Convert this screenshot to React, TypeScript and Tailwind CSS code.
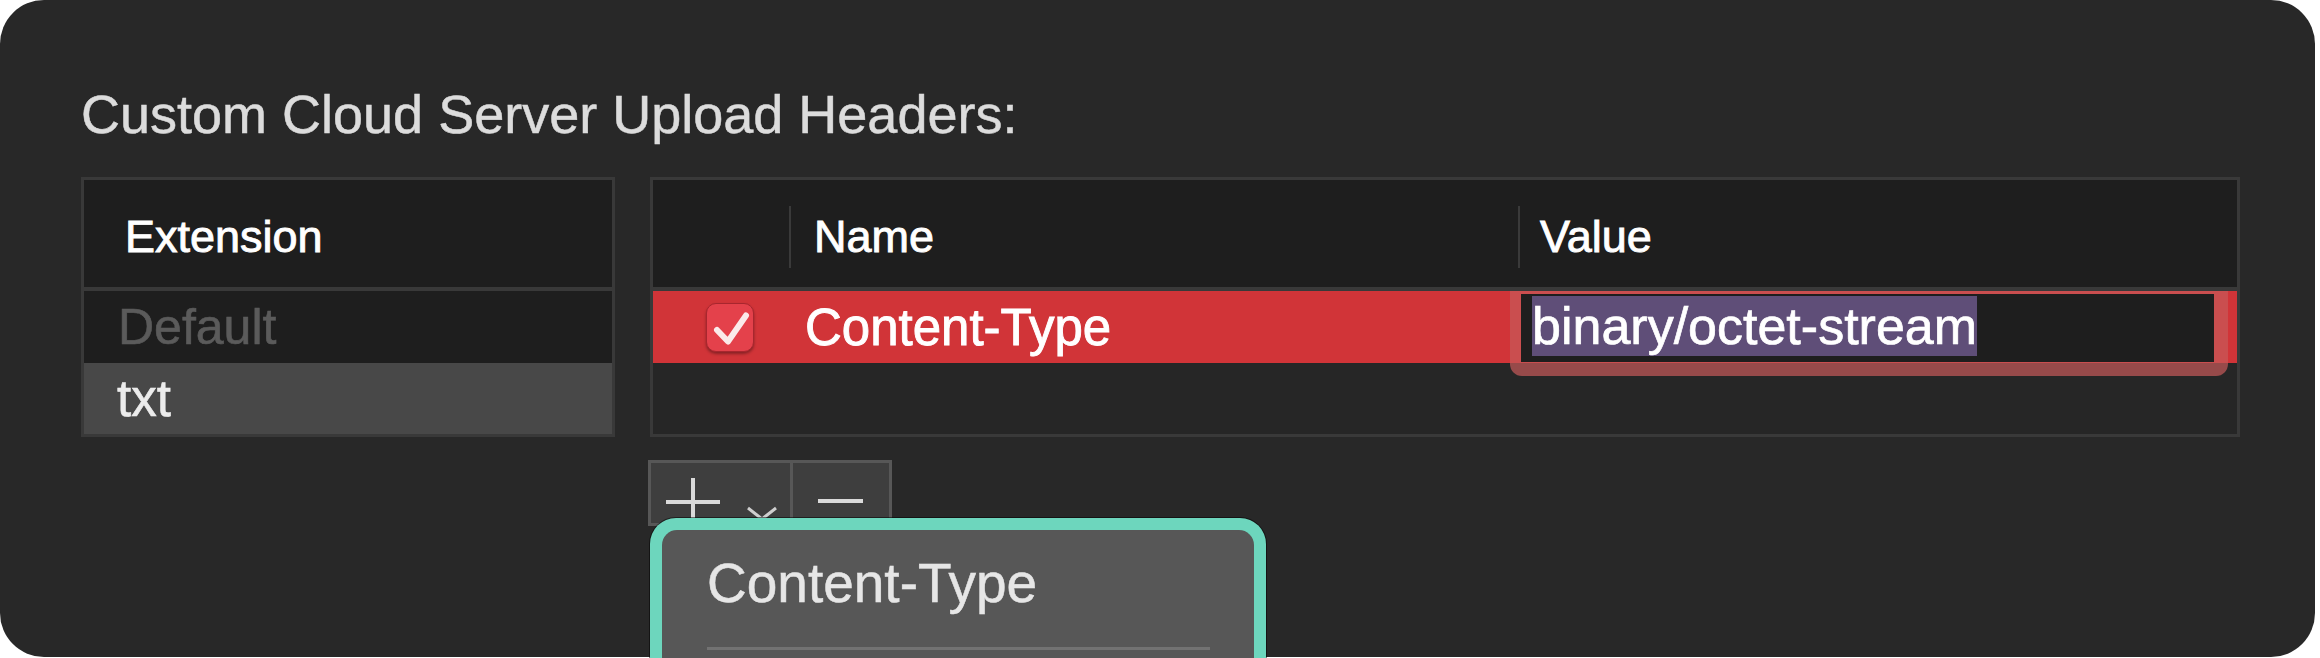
import React from "react";

const font = "font-['Liberation_Sans',Arial,sans-serif]";

function Check() {
  return (
    <svg width="48" height="49" viewBox="0 0 48 49" fill="none" className="absolute left-0 top-0">
      <path d="M10 26 L21 37.5 L39 11.5" stroke="#fbeaea" strokeWidth="6" strokeLinecap="round" strokeLinejoin="round" />
    </svg>
  );
}

export default function App() {
  return (
    <div className={`relative h-[658px] w-[2320px] overflow-hidden bg-white ${font}`}>
      <div className="h-[657px] w-[2315px] rounded-[44px] bg-[#282828] pl-[81px] pt-[88px]">
        <h1 className="text-[54px] leading-[53px] text-[#dcdcdc] [-webkit-text-stroke:0.5px_#dcdcdc]">Custom Cloud Server Upload Headers:</h1>
        <div className="mt-[36px] flex gap-[35px]">
          {/* Left table */}
          <div className="flex h-[260px] w-[534px] flex-col border-[3px] border-[#393939] bg-[#1e1e1e]">
            <div className="flex h-[107px] items-center pl-[41px] pt-[6px] text-[45px] leading-[45px] text-white [-webkit-text-stroke:0.9px_white]">
              Extension
            </div>
            <div className="h-[4px] bg-[#393939]" />
            <div className="flex h-[72px] items-center pl-[34px] text-[50px] leading-[50px] text-[#5b5b5b] [-webkit-text-stroke:0.6px_#5b5b5b]">Default</div>
            <div className="flex flex-1 items-center bg-[#484848] pl-[33px] text-[51px] leading-[51px] text-[#ececec] [-webkit-text-stroke:0.6px_#ececec]">txt</div>
          </div>

          {/* Right column */}
          <div className="flex flex-col">
            <div className="flex h-[260px] w-[1590px] flex-col border-[3px] border-[#393939] bg-[#262626]">
              <div className="flex h-[107px] items-center bg-[#1e1e1e] pt-[6px] text-[45px] leading-[45px] text-white [-webkit-text-stroke:0.9px_white]">
                <div className="w-[136px]" />
                <div className="h-[62px] w-[2px] bg-[#3a3a3a]" />
                <div className="w-[727px] pl-[23px]">Name</div>
                <div className="h-[62px] w-[2px] bg-[#3a3a3a]" />
                <div className="pl-[20px]">Value</div>
              </div>
              <div className="h-[4px] bg-[#393939]" />
              <div className="relative flex h-[72px] items-center bg-[#d13438]">
                <div className="relative ml-[53px] h-[49px] w-[48px] rounded-[10px] border border-[#a8262e] bg-[#e4414b] shadow-[0_2px_3px_rgba(0,0,0,0.35)]">
                  <Check />
                </div>
                <div className="ml-[51px] text-[51px] leading-[51px] text-white [-webkit-text-stroke:0.9px_white]">Content-Type</div>
                {/* editing field with focus ring */}
                <div className="absolute left-[857px] top-0 z-10 h-[85px] w-[718px] rounded-b-[12px] bg-[#c85a5a]/70">
                  <div className="ml-[11px] mt-[3px] flex h-[68px] w-[693px] items-start bg-[#1e1e1e] pl-[11px] pt-[2px]">
                    <span className="flex h-[60px] items-center bg-[#5f4e78] text-[52px] leading-[52px] text-white [-webkit-text-stroke:0.7px_white]">binary/octet-stream</span>
                  </div>
                </div>
              </div>
              <div className="flex-1 bg-[#262626]" />
            </div>

            {/* +/- segmented buttons */}
            <div className="ml-[-2px] mt-[23px] flex h-[66px] w-[244px] border-[3px] border-[#575757] bg-[#3e3e3e]">
              <div className="relative w-[139px]">
                <svg width="139" height="66" viewBox="0 0 139 66" className="absolute left-0 top-0">
                  <path d="M15 39 H69 M42 15 V66" stroke="#dadada" strokeWidth="4" />
                  <path d="M97 45 L111 56 L125 45" stroke="#cfcfcf" strokeWidth="3" fill="none" />
                </svg>
              </div>
              <div className="w-[3px] bg-[#575757]" />
              <div className="relative flex-1">
                <svg width="100" height="66" viewBox="0 0 100 66" className="absolute left-0 top-0">
                  <path d="M25 38 H70" stroke="#dadada" strokeWidth="4" />
                </svg>
              </div>
            </div>
          </div>
        </div>
      </div>

      {/* Popup menu overlay */}
      <div className="absolute left-[650px] top-[518px] z-20 h-[200px] w-[616px] rounded-[26px] bg-[#6dd6bd] p-[12px] shadow-[0_0_0_1px_rgba(0,0,0,0.5)]">
        <div className="h-full w-full rounded-[15px] bg-[#575757] pl-[45px] pt-[26px]">
          <div className="text-[55px] leading-[55px] text-[#e6e6e6] [-webkit-text-stroke:0.5px_#e6e6e6]">Content-Type</div>
          <div className="mt-[36px] h-[3px] w-[503px] bg-[#727272]" />
        </div>
      </div>
    </div>
  );
}
